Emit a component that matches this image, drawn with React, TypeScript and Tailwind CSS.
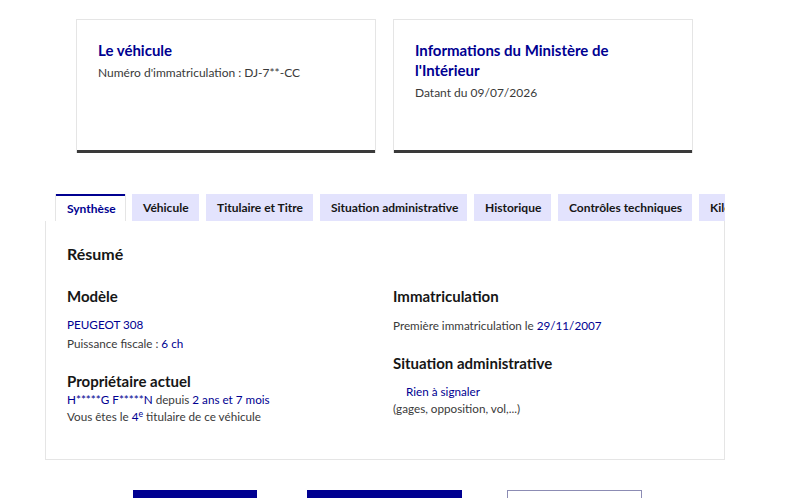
const font = { fontFamily: 'Lato, "Noto Sans", sans-serif' };

function InfoCard({ title, sub }: { title: React.ReactNode; sub: string }) {
  return (
    <div className="h-[134px] w-[300px] border border-b-0 border-[#e5e5e5] px-[21px] pt-[20px] shadow-[inset_0_-3px_0_0_#3a3a3a]">
      <h2 className="text-[15px] font-bold leading-[20px] text-[#000091]">{title}</h2>
      <p className="mt-[3px] text-[12px] leading-[20px] text-[#3a3a3a]">{sub}</p>
    </div>
  );
}

const tabs = [
  { label: 'Synthèse', w: 'w-[69px]' },
  { label: 'Véhicule', w: 'w-[67px]' },
  { label: 'Titulaire et Titre', w: 'w-[107px]' },
  { label: 'Situation administrative', w: 'w-[147px]' },
  { label: 'Historique', w: 'w-[77px]' },
  { label: 'Contrôles techniques', w: 'w-[134px]' },
  { label: 'Kilométrage', w: 'w-[90px]' },
];

export default function App() {
  return (
    <div style={font} className="relative h-[498px] w-[800px] overflow-hidden bg-white">
      <div className="flex gap-[17px] pl-[76px] pt-[19px]">
        <InfoCard title="Le véhicule" sub="Numéro d'immatriculation : DJ-7**-CC" />
        <InfoCard
          title={
            <>
              Informations du Ministère de
              <br />
              l'Intérieur
            </>
          }
          sub="Datant du 09/07/2026"
        />
      </div>

      <div className="ml-[45px] mt-[41px] w-[680px]">
        <div className="flex gap-[7px] overflow-hidden pl-[11px]">
          {tabs.map((t, i) =>
            i === 0 ? (
              <div
                key={t.label}
                className={`${t.w} flex h-[27px] shrink-0 items-center border-t-2 border-[#000091] bg-white px-[11px] text-[12px] font-bold text-[#000091] shadow-[1px_0_0_0_#e5e5e5,-1px_0_0_0_#e5e5e5]`}
              >
                {t.label}
              </div>
            ) : (
              <div
                key={t.label}
                className={`${t.w} flex h-[27px] shrink-0 items-center whitespace-nowrap bg-[#e3e3fd] px-[11px] text-[12px] font-bold text-[#161616]`}
              >
                {t.label}
              </div>
            ),
          )}
        </div>

        <div className="h-[239px] border border-t-0 border-[#e5e5e5] px-[21px] pt-[21px]">
          <h3 className="text-[16px] font-bold leading-[24px] text-[#161616]">Résumé</h3>
          <div className="mt-[19px] grid grid-cols-[326px_1fr]">
            <div>
              <h4 className="text-[15px] font-bold leading-[22px] text-[#161616]">Modèle</h4>
              <p className="mt-[8px] text-[11.7px] leading-[19px] text-[#000091]">PEUGEOT 308</p>
              <p className="text-[11.7px] leading-[19px] text-[#3a3a3a]">
                Puissance fiscale : <span className="text-[#000091]">6 ch</span>
              </p>
              <h4 className="mt-[18px] text-[15px] font-bold leading-[20px] text-[#161616]">
                Propriétaire actuel
              </h4>
              <p className="text-[11.7px] leading-[17px] text-[#3a3a3a]">
                <span className="text-[#000091]">H*****G F*****N</span> depuis{' '}
                <span className="text-[#000091]">2 ans et 7 mois</span>
              </p>
              <p className="text-[11.7px] leading-[17px] text-[#3a3a3a]">
                Vous êtes le <span className="text-[#000091]">4</span>
                <sup className="text-[#000091]">e</sup> titulaire de ce véhicule
              </p>
            </div>
            <div>
              <h4 className="text-[15px] font-bold leading-[22px] text-[#161616]">Immatriculation</h4>
              <p className="mt-[9px] text-[11.7px] leading-[19px] text-[#3a3a3a]">
                Première immatriculation le <span className="text-[#000091]">29/11/2007</span>
              </p>
              <h4 className="mt-[17px] text-[15px] font-bold leading-[22px] text-[#161616]">
                Situation administrative
              </h4>
              <p className="mt-[9px] pl-[13px] text-[11.7px] leading-[17px] text-[#000091]">Rien à signaler</p>
              <p className="text-[11.7px] leading-[17px] text-[#3a3a3a]">(gages, opposition, vol,...)</p>
            </div>
          </div>
        </div>
      </div>

      <div className="mt-[30px] flex pl-[133px]">
        <div className="h-[40px] w-[124px] bg-[#000091]" />
        <div className="ml-[50px] h-[40px] w-[155px] bg-[#000091]" />
        <div className="ml-[45px] h-[40px] w-[135px] border border-[#8c8cb4]" />
      </div>
    </div>
  );
}
